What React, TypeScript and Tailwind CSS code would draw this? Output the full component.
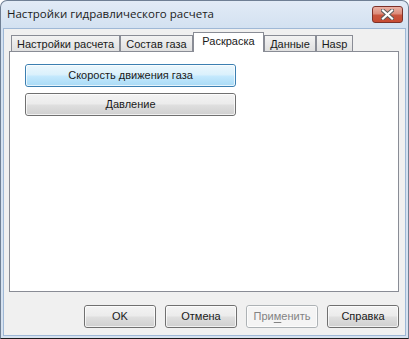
import type { ReactNode } from 'react';

const tabs = [
  { label: 'Настройки расчета', w: 'w-[109px]' },
  { label: 'Состав газа', w: 'w-[73px]' },
  { label: 'Раскраска', w: 'w-[71px]', active: true },
  { label: 'Данные', w: 'w-[52px]' },
  { label: 'Hasp', w: 'w-[37px]' },
];

function WinButton({ children, hot, disabled, className = '' }: {
  children: ReactNode;
  hot?: boolean;
  disabled?: boolean;
  className?: string;
}) {
  const look = disabled
    ? 'border-[#adb2b5] bg-[#f4f4f4] text-[#838383]'
    : hot
      ? 'border-[#3c7fb1] bg-[linear-gradient(#ecf7fd_0%,#dbf1fc_45%,#c3e8fd_55%,#a9daf5_100%)] text-[#1a1a1a]'
      : 'border-[#707070] bg-[linear-gradient(#f3f3f3_0%,#ececec_45%,#dedede_55%,#d0d0d0_100%)] text-[#1a1a1a]';
  return (
    <div className={`flex h-[23px] items-center justify-center rounded-[3px] border ${look} ${className}`}>
      <div className="flex h-full w-full items-center justify-center rounded-[2px] border border-white/70 text-[11px] leading-none">
        {children}
      </div>
    </div>
  );
}

function CloseButton() {
  return (
    <div className="mr-[3px] mt-[5px] flex h-[17px] w-[31px] items-center justify-center rounded-[3px] border border-[#7d3129] bg-[linear-gradient(#eab1a4_0%,#dc8c7b_45%,#c9553e_55%,#c74b33_100%)]">
      <svg width="13" height="11" viewBox="0 0 13 11">
        <path d="M2 1.5 L11 9.5 M11 1.5 L2 9.5" stroke="#5a5a5a" strokeWidth="4" strokeLinecap="square" />
        <path d="M2 1.5 L11 9.5 M11 1.5 L2 9.5" stroke="#ffffff" strokeWidth="2.2" strokeLinecap="square" />
      </svg>
    </div>
  );
}

export default function App() {
  return (
    <div className="h-[339px] w-[409px] bg-white font-['Liberation_Sans',Arial,sans-serif]">
      <div className="flex h-full flex-col rounded-t-[7px] border border-[#6f7f94] border-b-[#1c1c1c] bg-[linear-gradient(#e2ebf6_0px,#d3e1f1_27px,#d6e2f0_100%)] px-[2px] pb-[2px]">
        {/* Title bar */}
        <div className="flex h-[27px] shrink-0 items-start justify-between">
          <span className="ml-[4px] mt-[5px] font-['Open_Sans',sans-serif] text-[11.5px] leading-[16px] text-[#1b1b1b]">
            Настройки гидравлического расчета
          </span>
          <CloseButton />
        </div>

        {/* Client area */}
        <div className="flex flex-1 flex-col border border-[#9fb8d6] bg-[#f0f0f0] pb-[6px] pl-[5px] pr-[6px] pt-[3px]">
          <div className="relative z-10 -mb-px flex h-[20px] items-end pl-[2px]">
            {tabs.map((t) =>
              t.active ? (
                <div
                  key={t.label}
                  className={`${t.w} flex h-[20px] justify-center border border-b-0 border-[#898c95] bg-white pt-[2px] text-[11px] leading-[13px] text-[#1a1a1a]`}
                >
                  {t.label}
                </div>
              ) : (
                <div
                  key={t.label}
                  className={`${t.w} mb-px flex h-[16px] justify-center border border-b-0 border-[#898c95] bg-[linear-gradient(#f3f3f3,#e0e0e0)] pt-[2px] text-[11px] leading-[13px] text-[#1a1a1a]`}
                >
                  {t.label}
                </div>
              ),
            )}
          </div>

          {/* Tab page */}
          <div className="flex h-[241px] flex-col gap-[6px] border border-[#898c95] bg-white pl-[15px] pt-[12px]">
            <WinButton hot className="w-[211px]">Скорость движения газа</WinButton>
            <WinButton className="w-[211px]">Давление</WinButton>
          </div>

          {/* Dialog buttons */}
          <div className="mt-[13px] flex justify-end gap-[9px]">
            <WinButton className="w-[72px]">OK</WinButton>
            <WinButton className="w-[72px]">Отмена</WinButton>
            <WinButton disabled className="w-[72px]">
              <span>
                При<span className="underline underline-offset-[2px]">м</span>енить
              </span>
            </WinButton>
            <WinButton className="w-[72px]">Справка</WinButton>
          </div>
        </div>
      </div>
    </div>
  );
}
